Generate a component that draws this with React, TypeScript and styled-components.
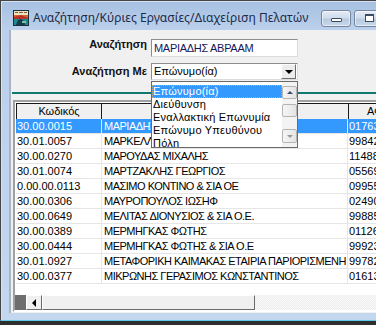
import React from 'react';
import styled, { createGlobalStyle } from 'styled-components';

const GlobalStyle = createGlobalStyle`
    html, body {
        margin: 0;
        padding: 0;
        background: #2e2e2e;
    }
    body {
        font-family: "Liberation Sans", Arial, sans-serif;
        overflow: hidden;
    }
`;

const Screen = styled.div`
    width: 376px;
    height: 325px;
    overflow: hidden;
    background: #2e2e2e;
`;

const Window = styled.div`
    width: 440px;
    height: 321px;
    box-sizing: border-box;
    display: flex;
    flex-direction: column;
    border: 1px solid #444;
    border-bottom-color: #5ccbe8;
    padding: 0 0 7px 8px;
    background: linear-gradient(#a7c0e1, #bad0eb 28px, #c3d7ee);
    box-shadow: inset 1px 1px 0 #d7e3f2;
`;

const TitleBar = styled.div`
    height: 29px;
    flex: none;
    display: flex;
    align-items: flex-start;
    padding: 9px 6px 0 4px;
    box-sizing: border-box;
`;

const TitleIcon = styled.svg`
    width: 16px;
    height: 16px;
    flex: none;
`;

const TitleText = styled.div`
    margin-left: 4px;
    font-family: "Noto Sans", "Open Sans", sans-serif;
    font-size: 12px;
    line-height: 16px;
    letter-spacing: 0.05px;
    color: #1d2a48;
    white-space: nowrap;
`;

const Controls = styled.div`
    margin-left: auto;
    display: flex;
`;

const CaptionButton = styled.div<{ $w: number; $gap: number; $close?: boolean }>`
    width: ${p => p.$w}px;
    height: 17px;
    margin-left: ${p => p.$gap}px;
    box-sizing: border-box;
    border: 1px solid #74869f;
    border-radius: 3px;
    background: ${p => (p.$close
        ? 'linear-gradient(#e8a497, #d0614c 50%, #c0402a)'
        : 'linear-gradient(#e4ecf6, #cfdcec 45%, #b8cae1 55%, #c9d8ea)')};
    box-shadow: inset 0 0 0 1px rgba(255, 255, 255, 0.55);
    display: flex;
    justify-content: center;
    align-items: flex-start;
`;

const MinGlyph = styled.div`
    width: 11px;
    height: 4px;
    margin-top: 7px;
    box-sizing: border-box;
    border: 1px solid #3c4a60;
    border-radius: 1px;
    background: #fff;
`;

const MaxGlyph = styled.div`
    width: 9px;
    height: 8px;
    margin-top: 3px;
    box-sizing: border-box;
    border: 1px solid #3c4a60;
    border-top-width: 2px;
    background: #fff;
`;

const CloseGlyph = styled.div`
    color: #fff;
    font-size: 11px;
    font-weight: bold;
    line-height: 15px;
`;

const Content = styled.div`
    flex: 1;
    display: flex;
    flex-direction: column;
    background: #f0f0f0;
    border-left: 2px solid #a9b5c4;
    min-height: 0;
`;

const SearchForm = styled.div`
    display: grid;
    grid-template-columns: 136px 147px;
    grid-template-rows: 18px 17px;
    column-gap: 4px;
    row-gap: 6px;
    padding-top: 9px;
`;

const Label = styled.div<{ $shift: number }>`
    text-align: right;
    font-size: 11px;
    line-height: 13px;
    font-weight: bold;
    color: #111;
    margin-top: ${p => p.$shift}px;
    white-space: nowrap;
`;

const TextBox = styled.div`
    box-sizing: border-box;
    background: #fff;
    border: 1px solid;
    border-color: #8d8d8d #dcdcdc #dcdcdc #8d8d8d;
    padding: 0 0 0 2px;
    font-size: 11px;
    line-height: 16px;
    letter-spacing: -0.3px;
    color: #15155a;
    white-space: nowrap;
`;

const SelectBox = styled.div`
    position: relative;
    box-sizing: border-box;
    background: #fff;
    border: 1px solid;
    border-color: #8d8d8d #dcdcdc #dcdcdc #8d8d8d;
    display: flex;
    align-items: stretch;
`;

const SelectValue = styled.div`
    flex: 1;
    padding-left: 2px;
    font-size: 11px;
    line-height: 15px;
    color: #000;
`;

const SelectArrow = styled.div`
    width: 15px;
    margin-right: 1px;
    box-sizing: border-box;
    background: #ececec;
    border: 1px solid;
    border-color: #fff #6f6f6f #6f6f6f #fff;
    display: flex;
    justify-content: center;
    align-items: center;
`;

const DownTriangle = styled.div`
    width: 0;
    height: 0;
    border-left: 4px solid transparent;
    border-right: 4px solid transparent;
    border-top: 4px solid #000;
`;

// the open list of the combo, lying over the grid
const DropList = styled.div`
    position: absolute;
    top: 17px;
    left: -1px;
    width: 147px;
    height: 67px;
    box-sizing: border-box;
    border: 1px solid #6a6a6a;
    background: #fff;
    display: flex;
    overflow: hidden;
    z-index: 2;
`;

const ListItems = styled.div`
    flex: 1;
    padding-top: 3px;
`;

const ListItem = styled.div<{ $active?: boolean }>`
    height: 13px;
    padding-left: 1px;
    font-size: 11px;
    line-height: 13px;
    letter-spacing: 0.2px;
    white-space: nowrap;
    color: ${p => (p.$active ? '#fff' : '#000')};
    background: ${p => (p.$active ? '#3399ff' : 'transparent')};
    outline: ${p => (p.$active ? '1px dotted #f0a040' : 'none')};
    outline-offset: -1px;
`;

const ListScroll = styled.div`
    width: 15px;
    display: flex;
    flex-direction: column;
    padding: 4px 0;
    box-sizing: border-box;
    background: #f3f3f3;
`;

const ScrollBtn = styled.div<{ $h: number; $gapTop?: number }>`
    height: ${p => p.$h}px;
    margin-top: ${p => p.$gapTop || 0}px;
    box-sizing: border-box;
    border: 1px solid #b4b4b4;
    border-radius: 2px;
    background: linear-gradient(90deg, #f6f6f6, #e4e4e4);
    display: flex;
    justify-content: center;
    align-items: center;
`;

const ArrowUp = styled.div<{ $color: string }>`
    width: 0;
    height: 0;
    border-left: 3px solid transparent;
    border-right: 3px solid transparent;
    border-bottom: 3px solid ${p => p.$color};
`;

const ArrowDown = styled.div<{ $color: string }>`
    width: 0;
    height: 0;
    border-left: 3px solid transparent;
    border-right: 3px solid transparent;
    border-top: 3px solid ${p => p.$color};
`;

const Spacer = styled.div`
    flex: 1;
`;

const Divider = styled.div`
    height: 2px;
    margin-top: 12px;
    margin-left: 1px;
    background: #11786f;
`;

const Grid = styled.div`
    margin: 6px 0 0 2px;
    height: 212px;
    box-sizing: border-box;
    border: 2px solid;
    border-color: #a0a0a0 #ffffff #ffffff #a0a0a0;
    padding: 1px 0 0 0;
    background: #fff;
    display: flex;
    flex-direction: column;
`;

const HeaderRow = styled.div`
    display: flex;
    height: 16px;
    padding-left: 1px;
`;

const HeaderCell = styled.div<{ $w: number }>`
    width: ${p => p.$w}px;
    flex: none;
    box-sizing: border-box;
    border-top: 1px solid #1a1a1a;
    border-left: 1px solid #1a1a1a;
    background: #f0f0f0;
    font-size: 11px;
    line-height: 15px;
    text-align: center;
    color: #000;
    overflow: hidden;
    white-space: nowrap;
`;

const Body = styled.div`
    flex: 1;
    padding-left: 1px;
`;

const Row = styled.div<{ $selected?: boolean }>`
    display: flex;
    height: 15px;
    box-sizing: border-box;
    border-bottom: 1px solid #e6e6e6;
    background: ${p => (p.$selected ? '#3399ff' : '#fff')};
    color: ${p => (p.$selected ? '#fff' : '#000')};
`;

const Cell = styled.div<{ $w: number; $tight?: boolean; $pad: number }>`
    width: ${p => p.$w}px;
    flex: none;
    box-sizing: border-box;
    border-right: 1px solid #e6e6e6;
    padding-left: ${p => p.$pad}px;
    font-size: 11px;
    line-height: 14px;
    letter-spacing: ${p => (p.$tight ? '-0.5px' : '0')};
    white-space: nowrap;
    overflow: hidden;
`;

const HScroll = styled.div`
    display: flex;
    height: 15px;
    flex: none;
`;

const ScrollCorner = styled.div`
    width: 11px;
    background: #6e6e6e;
`;

const RaisedButton = styled.div<{ $w: number }>`
    width: ${p => p.$w}px;
    box-sizing: border-box;
    background: #f0f0f0;
    border: 1px solid;
    border-color: #fff #6b6b6b #6b6b6b #fff;
    display: flex;
    justify-content: center;
    align-items: center;
`;

const LeftTriangle = styled.div`
    width: 0;
    height: 0;
    border-top: 4px solid transparent;
    border-bottom: 4px solid transparent;
    border-right: 4px solid #000;
`;

const Track = styled.div`
    flex: 1;
    background-color: #f7f7f7;
    background-image: repeating-conic-gradient(#ececec 0 25%, #fbfbfb 0 50%);
    background-size: 2px 2px;
`;

const rows = [
    ['30.00.0015', 'ΜΑΡΙΑΔΗΣ ΑΒΡΑΑΜ', '017632540'],
    ['30.01.0057', 'ΜΑΡΚΕΛΛΑΣ ΝΙΚΟΛΑΟΣ', '998421307'],
    ['30.00.0270', 'ΜΑΡΟΥΔΑΣ ΜΙΧΑΛΗΣ', '114885962'],
    ['30.01.0074', 'ΜΑΡΤΖΑΚΛΗΣ ΓΕΩΡΓΙΟΣ', '055691284'],
    ['0.00.00.0113', 'ΜΑΣΙΜΟ ΚΟΝΤΙΝΟ & ΣΙΑ ΟΕ', '099557316'],
    ['30.00.0306', 'ΜΑΥΡΟΠΟΥΛΟΣ ΙΩΣΗΦ', '024906671'],
    ['30.00.0649', 'ΜΕΛΙΤΑΣ ΔΙΟΝΥΣΙΟΣ & ΣΙΑ Ο.Ε.', '998853402'],
    ['30.00.0389', 'ΜΕΡΜΗΓΚΑΣ ΦΩΤΗΣ', '011264738'],
    ['30.00.0444', 'ΜΕΡΜΗΓΚΑΣ ΦΩΤΗΣ & ΣΙΑ Ο.Ε', '999231850'],
    ['30.01.0927', 'ΜΕΤΑΦΟΡΙΚΗ ΚΑΙΜΑΚΑΣ ΕΤΑΙΡΙΑ ΠΑΡΙΟΡΙΣΜΕΝΗ', '997825019'],
    ['30.00.0377', 'ΜΙΚΡΩΝΗΣ  ΓΕΡΑΣΙΜΟΣ ΚΩΝΣΤΑΝΤΙΝΟΣ', '016137745'],
];

const searchOptions = ['Επώνυμο(ία)', 'Διεύθυνση', 'Εναλλακτική Επωνυμία', 'Επώνυμο Υπευθύνου', 'Πόλη'];

const App = () => {
    return (
        <Screen>
            <GlobalStyle />
            <Window>
                <TitleBar>
                    <TitleIcon viewBox="0 0 16 16">
                        <rect x="0" y="0" width="16" height="16" fill="#1c2f3c" />
                        <rect x="1" y="1" width="14" height="4" fill="#e9e4c6" />
                        <rect x="2" y="2" width="3" height="1" fill="#8a5a2a" />
                        <rect x="6" y="2" width="4" height="1" fill="#8a5a2a" />
                        <rect x="11" y="2" width="3" height="1" fill="#8a5a2a" />
                        <rect x="1" y="5" width="14" height="4" fill="#d9662a" />
                        <path d="M1 7 L8 5 L15 8 L15 9 L1 9 Z" fill="#b8322a" />
                        <path d="M1 9 L15 9 L15 15 L1 15 Z" fill="#1f8a8c" />
                        <path d="M3 15 L5 10 L8 9 L11 11 L12 15 Z" fill="#17394a" />
                        <rect x="9" y="11" width="4" height="2" fill="#7cc3a8" />
                    </TitleIcon>
                    <TitleText>Αναζήτηση/Κύριες Εργασίες/Διαχείριση Πελατών</TitleText>
                    <Controls>
                        <CaptionButton $w={30} $gap={0}>
                            <MinGlyph />
                        </CaptionButton>
                        <CaptionButton $w={30} $gap={3}>
                            <MaxGlyph />
                        </CaptionButton>
                        <CaptionButton $w={47} $gap={2} $close>
                            <CloseGlyph>✕</CloseGlyph>
                        </CaptionButton>
                    </Controls>
                </TitleBar>
                <Content>
                    <SearchForm>
                        <Label $shift={-1}>Αναζήτηση</Label>
                        <TextBox>ΜΑΡΙΑΔΗΣ ΑΒΡΑΑΜ</TextBox>
                        <Label $shift={2}>Αναζήτηση Με</Label>
                        <SelectBox>
                            <SelectValue>Επώνυμο(ία)</SelectValue>
                            <SelectArrow>
                                <DownTriangle />
                            </SelectArrow>
                            <DropList>
                                <ListItems>
                                    {searchOptions.map((opt, i) => (
                                        <ListItem key={opt} $active={i === 0}>{opt}</ListItem>
                                    ))}
                                </ListItems>
                                <ListScroll>
                                    <ScrollBtn $h={13}>
                                        <ArrowUp $color="#3d4f70" />
                                    </ScrollBtn>
                                    <ScrollBtn $h={13} $gapTop={5} />
                                    <Spacer />
                                    <ScrollBtn $h={14}>
                                        <ArrowDown $color="#9a9a9a" />
                                    </ScrollBtn>
                                </ListScroll>
                            </DropList>
                        </SelectBox>
                    </SearchForm>
                    <Divider />
                    <Grid>
                        <HeaderRow>
                            <HeaderCell $w={85}>Κωδικός</HeaderCell>
                            <HeaderCell $w={247}>Επωνυμία</HeaderCell>
                            <HeaderCell $w={62}>ΑΦΜ</HeaderCell>
                        </HeaderRow>
                        <Body>
                            {rows.map((r, i) => (
                                <Row key={r[0] + i} $selected={i === 0}>
                                    <Cell $w={86} $pad={1}>{r[0]}</Cell>
                                    <Cell $w={246} $pad={2} $tight>{r[1]}</Cell>
                                    <Cell $w={62} $pad={1}>{r[2]}</Cell>
                                </Row>
                            ))}
                        </Body>
                        <HScroll>
                            <ScrollCorner />
                            <RaisedButton $w={16}>
                                <LeftTriangle />
                            </RaisedButton>
                            <RaisedButton $w={213} />
                            <Track />
                        </HScroll>
                    </Grid>
                </Content>
            </Window>
        </Screen>
    );
};

export default App;
